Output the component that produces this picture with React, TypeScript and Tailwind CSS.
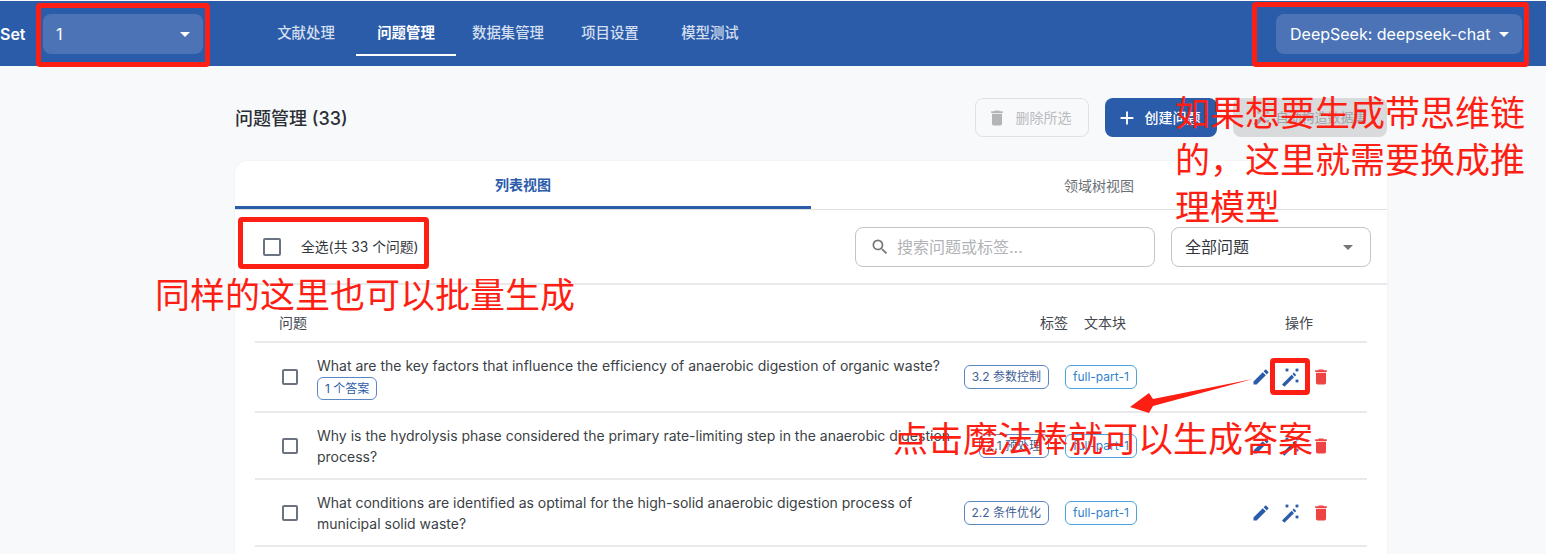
import { MdAdd, MdArrowDropDown, MdAutoFixHigh, MdDelete, MdEdit, MdSearch } from 'react-icons/md';

const FONT = "font-['Inter','Noto_Sans_CJK_SC',sans-serif]";

const navTabs = [
  { label: '文献处理' },
  { label: '问题管理', active: true },
  { label: '数据集管理' },
  { label: '项目设置' },
  { label: '模型测试' },
];

const rows = [
  {
    lines: ['What are the key factors that influence the efficiency of anaerobic digestion of organic waste?'],
    answers: '1 个答案',
    tag: '3.2 参数控制',
    h: 'h-[70px]',
  },
  {
    lines: ['Why is the hydrolysis phase considered the primary rate-limiting step in the anaerobic digestion', 'process?'],
    tag: '2.1 预处理',
    h: 'h-[67px]',
  },
  {
    lines: ['What conditions are identified as optimal for the high-solid anaerobic digestion process of', 'municipal solid waste?'],
    tag: '2.2 条件优化',
    h: 'h-[67px]',
  },
];

function Wand() {
  return (
    <svg width="20" height="20" viewBox="0 0 20 20" className="text-[#2a5caa]">
      <path d="M1 17.4 L10.6 7.8 L13 10.2 L3.4 19.8 Z" fill="currentColor" />
      <path d="M11.4 7 L12.8 5.6 L15.2 8 L13.8 9.4 Z" fill="currentColor" />
      <path
        d="M4.7 1.7 L7.3 4.3 M7.3 1.7 L4.7 4.3 M14.7 1.7 L17.3 4.3 M17.3 1.7 L14.7 4.3 M14.7 12.7 L17.3 15.3 M17.3 12.7 L14.7 15.3"
        stroke="currentColor"
        strokeWidth="1.3"
        fill="none"
      />
    </svg>
  );
}

function Checkbox({ size }: { size: string }) {
  return <span className={`${size} shrink-0 rounded-[2px] border-2 border-[#6b7280] bg-white`} />;
}

function Row({ row }: { row: (typeof rows)[number] }) {
  return (
    <div className={`flex items-center border-b-2 border-[#e8e9eb] pl-[27px] ${row.h}`}>
      <Checkbox size="w-4 h-4" />
      <div className="ml-[19px] w-[648px] shrink-0 pt-px text-[14px] leading-[21px] text-[#3b3f46]">
        {row.lines.map((l) => (
          <div key={l} className="whitespace-nowrap">
            {l}
          </div>
        ))}
        {row.answers && (
          <span className="mt-px block w-fit rounded-[6px] border border-[#5b86c4] px-[7px] text-[12px] leading-[21px] text-[#2a5caa]">
            {row.answers}
          </span>
        )}
      </div>
      <div className="flex w-[84px] shrink-0 justify-end">
        <span className="whitespace-nowrap rounded-[6px] border border-[#5b86c4] px-[7px] text-[12px] leading-[22px] text-[#3f5f95]">
          {row.tag}
        </span>
      </div>
      <span className="ml-4 rounded-[6px] border border-[#4aa3df] px-[7px] text-[12px] leading-[22px] text-[#2f7fd0]">
        full-part-1
      </span>
      <div className="ml-[114px] flex items-center gap-[10px]">
        <MdEdit size={20} className="text-[#2a5caa]" />
        <Wand />
        <MdDelete size={20} className="text-[#ef4444]" />
      </div>
    </div>
  );
}

export default function App() {
  return (
    <div className={`relative h-[554px] w-[1546px] overflow-hidden bg-[#f8f9fb] pt-px ${FONT}`}>
      <header className="flex h-[65px] items-center bg-[#2a5caa]">
        <span className="w-[43px] shrink-0 text-[16px] font-semibold text-white">Set</span>
        <div className="flex h-10 w-40 items-center justify-between rounded-lg bg-[#4b73b6] pl-[13px] pr-[6px] text-[16px] text-white">
          1
          <MdArrowDropDown size={24} />
        </div>
        <nav className="ml-[53px] flex h-full items-start pt-[11px]">
          {navTabs.map((t) => (
            <div
              key={t.label}
              className={`flex h-[44px] min-w-[100px] items-center justify-center border-b-2 px-4 text-[14.4px] ${
                t.active ? 'border-white font-semibold text-white' : 'border-transparent font-medium text-[#d3deef]'
              }`}
            >
              {t.label}
            </div>
          ))}
        </nav>
        <div className="ml-auto mr-6 flex h-10 w-[246px] items-center justify-between rounded-lg bg-[#4b73b6] pl-[14px] pr-[6px] text-[16px] text-white">
          DeepSeek: deepseek-chat
          <MdArrowDropDown size={24} />
        </div>
      </header>

      <main className="ml-[235px] w-[1152px]">
        <div className="flex h-[95px] items-center justify-between pt-[8px]">
          <h1 className="pt-[1px] text-[18px] font-medium text-[#2b2f36]">问题管理 (33)</h1>
          <div className="flex gap-4">
            <button className="flex h-[39px] w-[114px] items-center justify-center gap-[9px] rounded-lg border border-[#dfe1e4] pr-[6px] text-[14px] text-[#b9bbbe]">
              <MdDelete size={20} className="text-[#b4b5b7]" />
              删除所选
            </button>
            <button className="flex h-[39px] w-[112px] items-center justify-center gap-[7px] rounded-lg bg-[#2a5caa] pr-[6px] text-[14px] font-medium text-white">
              <MdAdd size={22} />
              创建问题
            </button>
            <button className="flex h-[39px] w-[154px] items-center justify-center gap-1 rounded-lg bg-[#d9dadc] text-[13px] text-[#a2a4a8]">
              <MdAutoFixHigh size={18} />
              自动构造数据集
            </button>
          </div>
        </div>

        <section className="h-[400px] rounded-t-xl bg-white shadow-[0_0_2px_rgba(0,0,0,0.08)]">
          <div className="flex h-[49px] border-b border-[#e0e0e0]">
            <div className="flex h-[48px] w-1/2 items-center justify-center border-b-[3px] border-[#2a5caa] pt-px text-[14px] font-semibold text-[#2a5caa]">
              列表视图
            </div>
            <div className="flex h-[48px] w-1/2 items-center justify-center pt-px text-[14px] text-[#6b6f76]">领域树视图</div>
          </div>

          <div className="flex h-[75px] items-center border-b-2 border-[#e8e9eb] pl-[28px] pr-4">
            <Checkbox size="w-[18px] h-[18px]" />
            <span className="ml-5 pt-px text-[13.8px] text-[#33373d]">全选(共 33 个问题)</span>
            <div className="ml-auto flex h-10 w-[300px] items-center rounded-lg border border-[#c4c4c4] pl-[14px] text-[16px] text-[#b1b3b6]">
              <MdSearch size={20} className="mr-[7px] text-[#757575]" />
              搜索问题或标签...
            </div>
            <div className="ml-4 flex h-10 w-[200px] items-center justify-between rounded-lg border border-[#c4c4c4] pl-[13px] pr-[10px] text-[16px] text-[#33373d]">
              全部问题
              <MdArrowDropDown size={24} className="text-[#757575]" />
            </div>
          </div>

          <div className="mx-5">
            <div className="flex h-[58px] items-end border-b-2 border-[#e8e9eb] pb-[8px] text-[14px] text-[#43474e]">
              <span className="ml-6">问题</span>
              <span className="ml-[733px]">标签</span>
              <span className="ml-4">文本块</span>
              <span className="ml-[159px]">操作</span>
            </div>
            {rows.map((r) => (
              <Row key={r.lines[0]} row={r} />
            ))}
          </div>
        </section>
      </main>

      {/* 红色标注 */}
      <div className="absolute left-[36px] top-[3px] h-[64px] w-[174px] rounded-[4px] border-[5px] border-[#fe1f14]" />
      <div className="absolute left-[1252px] top-[2px] h-[65px] w-[277px] rounded-[4px] border-[5px] border-[#fe1f14]" />
      <div className="absolute left-[238px] top-[217px] h-[52px] w-[191px] rounded-[4px] border-[5px] border-[#fe1f14]" />
      <div className="absolute left-[1270px] top-[358px] h-[37px] w-[40px] rounded-[4px] border-[5px] border-[#fe1f14]" />
      <div className="absolute left-[1175px] top-[90px] w-[352px] text-[35px] leading-[47px] text-[#fe1f14]">
        如果想要生成带思维链的，这里就需要换成推理模型
      </div>
      <div className="absolute left-[155px] top-[272px] whitespace-nowrap text-[35px] leading-[47px] text-[#fe1f14]">
        同样的这里也可以批量生成
      </div>
      <div className="absolute left-[893px] top-[416px] whitespace-nowrap text-[35px] leading-[47px] text-[#fe1f14]">
        点击魔法棒就可以生成答案
      </div>
      <svg className="absolute left-[1125px] top-[375px]" width="135" height="45" viewBox="0 0 135 45">
        <polygon points="128,4 28,24 24,18 5,32 24,38 28,31" fill="#fe1f14" />
      </svg>
    </div>
  );
}
